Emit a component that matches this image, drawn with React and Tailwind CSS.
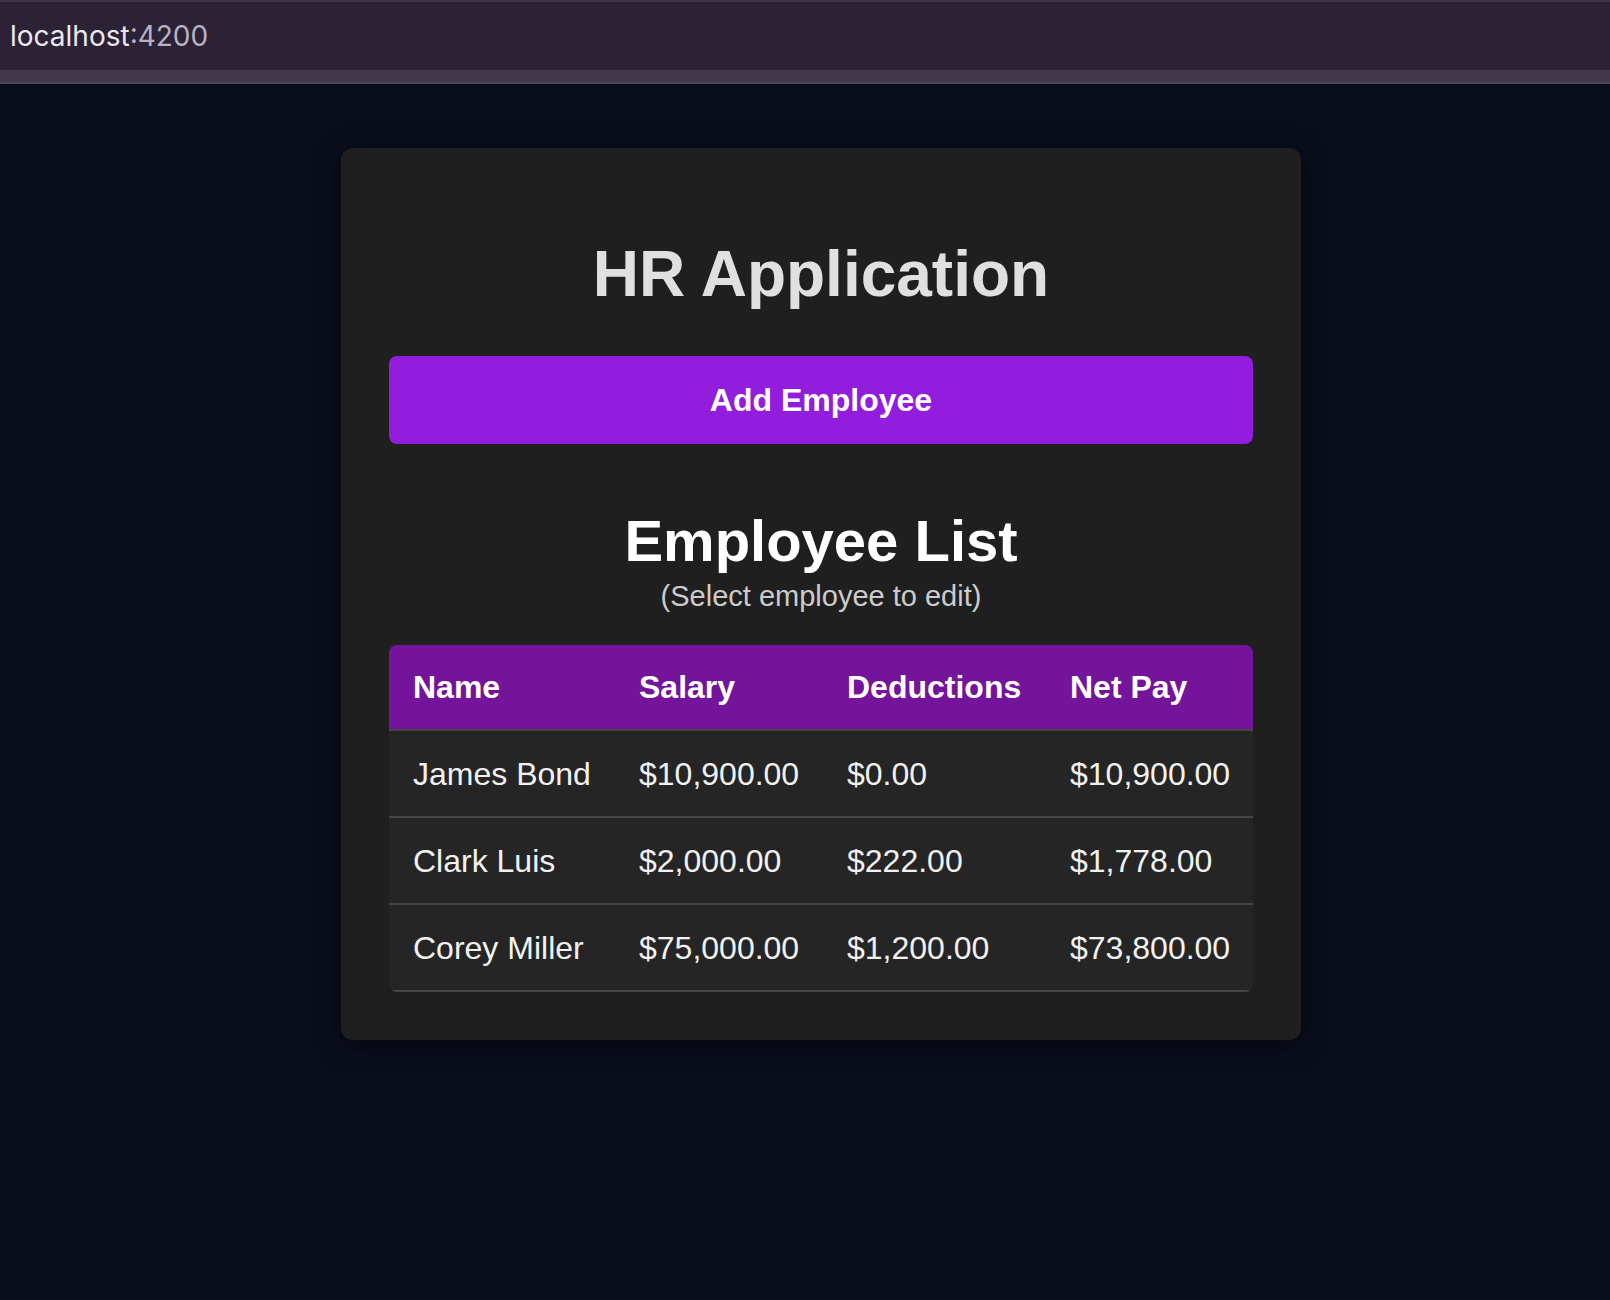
export default function App() {
  const rows = [
    ["James Bond", "$10,900.00", "$0.00", "$10,900.00"],
    ["Clark Luis", "$2,000.00", "$222.00", "$1,778.00"],
    ["Corey Miller", "$75,000.00", "$1,200.00", "$73,800.00"],
  ];
  return (
    <div className="min-h-screen bg-[#0a0e1c] font-['Liberation_Sans',Arial,sans-serif]">
      <div className="border-t-2 border-[#3e3548]">
        <div className="h-[68px] bg-[#2b2235] flex items-center pl-[10px] font-['Inter',sans-serif] text-[28px]">
          <span className="text-[#ece8f0]">localhost</span>
          <span className="text-[#b9b1c2]">:4200</span>
        </div>
        <div className="h-[12px] bg-[#41374b]"></div>
        <div className="h-[2px] bg-[#4e4a52]"></div>
      </div>
      <div className="flex justify-center pt-[64px] pl-[32px]">
        <div className="w-[960px] bg-[#1f1f1f] rounded-[12px] p-[48px] shadow-[0_4px_24px_rgba(0,0,0,0.55)]">
          <h1 className="mt-[42px] text-center text-[64px] leading-[72px] font-bold text-[#e0e0e0]">HR Application</h1>
          <button className="mt-[46px] w-full h-[88px] rounded-[8px] bg-[#921ddd] text-white text-[32px] font-bold">Add Employee</button>
          <h2 className="mt-[65px] text-center text-[58px] leading-[64px] font-bold text-white">Employee List</h2>
          <p className="mt-[7px] text-center text-[29px] leading-[32px] text-[#cccccc]">(Select employee to edit)</p>
          <div className="mt-[33px] rounded-[8px] overflow-hidden">
            <div className="grid grid-cols-[226px_208px_223px_207px] h-[86px] bg-[#74149a] border-b-2 border-[#454545] items-center text-white font-bold text-[32px]">
              <div className="pl-[24px]">Name</div>
              <div className="pl-[24px]">Salary</div>
              <div className="pl-[24px]">Deductions</div>
              <div className="pl-[24px]">Net Pay</div>
            </div>
            {rows.map((r) => (
              <div key={r[0]} className="grid grid-cols-[226px_208px_223px_207px] h-[87px] bg-[#252525] border-b-2 border-[#454545] items-center text-[#f2f2f2] text-[32px]">
                {r.map((c, i) => (
                  <div key={i} className="pl-[24px] whitespace-nowrap">{c}</div>
                ))}
              </div>
            ))}
          </div>
        </div>
      </div>
    </div>
  );
}
